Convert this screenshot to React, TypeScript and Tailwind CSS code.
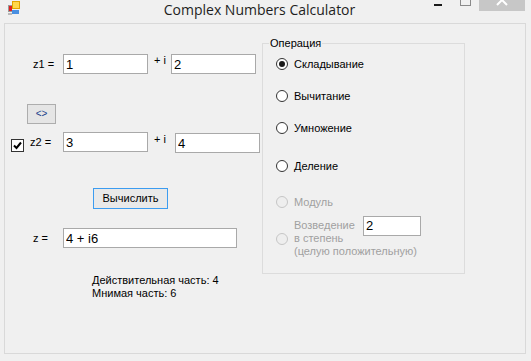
import React from "react";

const ui = "font-['Liberation_Sans',Arial,sans-serif] text-[11px] leading-[13px] text-black";
const field =
  "h-[20px] shrink-0 border border-[#a9a9a9] bg-white pl-[2px] font-['Liberation_Sans',Arial,sans-serif] text-[13px] leading-[18px] text-black";

function AppIcon() {
  return (
    <svg width="14" height="14" viewBox="0 0 14 14" className="shrink-0">
      <rect x="1" y="4" width="4" height="7" fill="#9a9a9a" />
      <rect x="2" y="5" width="3" height="5" fill="#e02020" />
      <rect x="5" y="0" width="8" height="8" fill="#e3a400" />
      <rect x="6" y="1" width="6" height="6" fill="#ffd84a" />
      <rect x="5" y="9" width="7" height="4" fill="#4a8fe0" />
      <rect x="1" y="12" width="4" height="2" fill="#b8b8b8" />
    </svg>
  );
}

function Radio({ label, checked, disabled }: { label: string; checked?: boolean; disabled?: boolean }) {
  return (
    <div className="flex h-[14px] items-center">
      <span
        className={
          disabled
            ? "flex h-[12px] w-[12px] shrink-0 items-center justify-center rounded-full border border-[#c6c6c6] bg-[#eeeeee]"
            : "flex h-[12px] w-[12px] shrink-0 items-center justify-center rounded-full border border-[#333333] bg-white"
        }
      >
        {checked && <span className="h-[6px] w-[6px] rounded-full bg-[#1a1a1a]" />}
      </span>
      <span className={disabled ? "ml-[6px] text-[#a0a0a0]" : "ml-[6px]"}>{label}</span>
    </div>
  );
}

export default function App() {
  return (
    <div className={`h-[361px] w-[531px] overflow-hidden bg-[#f0f0f0] ${ui}`}>
      {/* title bar */}
      <div className="grid h-[23px] grid-cols-[1fr_auto_1fr]">
        <div className="pl-[7px] pt-[1px]">
          <AppIcon />
        </div>
        <div className="pr-[12px] font-['Open_Sans',sans-serif] text-[14px] leading-[19px] text-[#1e1e1e]">
          Complex Numbers Calculator
        </div>
        <div className="flex items-start justify-end pr-[6px]">
          <span className="mt-[4px] h-[2px] w-[8px] bg-[#1a1a1a]" />
          <span className="ml-[18px] h-[6px] w-[11px] border border-t-0 border-[#8a8a8a]" />
          <span className="ml-[8px] flex h-[11px] w-[46px] justify-center overflow-hidden bg-[#c7c7c7]">
            <svg width="12" height="12" viewBox="0 0 12 12" className="-mt-[6px]">
              <path d="M1 1 L11 11 M11 1 L1 11" stroke="#ffffff" strokeWidth="2" />
            </svg>
          </span>
        </div>
      </div>

      {/* client area */}
      <div className="ml-[4px] flex h-[331px] w-[522px] border border-[#d9d9d9]">
        <div className="flex w-[257px] shrink-0 flex-col">
          {/* z1 */}
          <div className="mt-[30px] flex h-[20px] items-center">
            <span className="ml-[28px] w-[30px]">z1 =</span>
            <input className={`${field} w-[85px]`} defaultValue="1" />
            <span className="w-[23px] self-start pl-[6px]">+ i</span>
            <input className={`${field} w-[85px]`} defaultValue="2" />
          </div>

          <button className="ml-[22px] mt-[30px] h-[20px] w-[29px] border border-[#adadad] bg-[#e5e5e5] text-[10px] leading-[18px] text-[#1b3f8a]">
            &lt;&gt;
          </button>

          {/* z2 */}
          <div className="mt-[8px] flex items-start">
            <span className="ml-[6px] mt-[7px] flex h-[13px] w-[13px] shrink-0 items-center justify-center border border-[#333333] bg-white">
              <svg width="9" height="9" viewBox="0 0 9 9">
                <path d="M1 4.5 L3.5 7 L8 1.5" fill="none" stroke="#000" strokeWidth="2" />
              </svg>
            </span>
            <span className="ml-[6px] flex h-[20px] w-[33px] items-center">z2 =</span>
            <input className={`${field} w-[85px]`} defaultValue="3" />
            <span className="mt-[1px] w-[27px] pl-[6px]">+ i</span>
            <input className={`${field} mt-[1px] w-[85px]`} defaultValue="4" />
          </div>

          <button className="ml-[88px] mt-[35px] h-[21px] w-[75px] border border-[#3c9cf0] bg-[#e9e9e9] leading-[19px]">
            Вычислить
          </button>

          {/* result */}
          <div className="mt-[19px] flex h-[20px] items-center">
            <span className="ml-[28px] w-[30px]">z =</span>
            <input className={`${field} w-[174px]`} defaultValue="4 + i6" />
          </div>

          <div className="ml-[87px] mt-[26px] flex flex-col">
            <span>Действительная часть: 4</span>
            <span>Мнимая часть: 6</span>
          </div>
        </div>

        {/* operations group */}
        <fieldset className="mt-[13px] h-[237px] w-[203px] shrink-0 border border-[#dcdcdc] p-0">
          <legend className="ml-[6px] px-[1px]">Операция</legend>
          <div className="flex flex-col pl-[13px]">
            <div className="mt-[7px]">
              <Radio label="Складывание" checked />
            </div>
            <div className="mt-[18px]">
              <Radio label="Вычитание" />
            </div>
            <div className="mt-[18px]">
              <Radio label="Умножение" />
            </div>
            <div className="mt-[24px]">
              <Radio label="Деление" />
            </div>
            <div className="mt-[22px]">
              <Radio label="Модуль" disabled />
            </div>
            <div className="mt-[10px] flex items-center">
              <span className="h-[12px] w-[12px] shrink-0 rounded-full border border-[#c6c6c6] bg-[#eeeeee]" />
              <div className="ml-[6px] flex flex-col text-[#a0a0a0]">
                <div className="flex h-[13px] items-center">
                  <span className="w-[69px] shrink-0">Возведение</span>
                  <input className={`${field} w-[58px]`} defaultValue="2" />
                </div>
                <span>в степень</span>
                <span className="whitespace-nowrap">(целую положительную)</span>
              </div>
            </div>
          </div>
        </fieldset>
      </div>
    </div>
  );
}
